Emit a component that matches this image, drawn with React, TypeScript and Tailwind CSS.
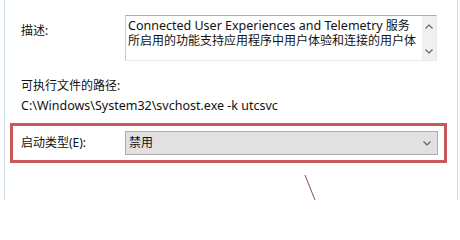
import React from "react";

const Chevron = ({ up = false }: { up?: boolean }) => (
  <svg width="8" height="5" viewBox="0 0 8 5" className="block">
    <path
      d={up ? "M0.5 4.5 L4 1 L7.5 4.5" : "M0.5 0.5 L4 4 L7.5 0.5"}
      fill="none"
      stroke="#606060"
      strokeWidth="1.1"
    />
  </svg>
);

export default function App() {
  return (
    <div
      className="relative w-[460px] h-[200px] bg-white overflow-hidden text-[12px] text-[#111111]"
      style={{ fontFamily: '"Noto Sans", "Noto Sans CJK SC", sans-serif' }}
    >
      <div className="ml-[4px] w-[454px] h-full border-l border-r border-l-[#c9d6e3] border-r-[#d6d6d6] pl-[16px] flex flex-col">
        {/* Description row */}
        <div className="flex mt-[15px]">
          <div className="w-[104px] mt-[8px] leading-[15px]">描述:</div>
          <div className="relative w-[312px] h-[46px] border border-t-[#abadb3] border-l-[#c8cbd2] border-r-[#e3e9ef] border-b-[#e3e9ef] flex">
            <div className="flex-1 min-w-0 pl-[2px] pt-[2px] leading-[15px] whitespace-nowrap overflow-hidden">
              <div className="h-[15px]">
                <span className="text-[12.5px]">Connected User Experiences and Telemetry</span> 服务
              </div>
              <div className="h-[15px]">所启用的功能支持应用程序中用户体验和连接的用户体</div>
            </div>
            <div className="w-[14px] h-full bg-[#f0f0f0] flex flex-col items-center justify-between pt-[8px] pb-[6px]">
              <Chevron up />
              <Chevron />
            </div>
          </div>
        </div>

        {/* Path */}
        <div className="mt-[15px] leading-[20px]">可执行文件的路径:</div>
        <div className="leading-[20px] text-[12.5px]">C:\Windows\System32\svchost.exe -k utcsvc</div>

        {/* Startup type (highlighted) */}
        <div className="mt-[7px] -ml-[11px] w-[437px] h-[40px] border-[3px] border-[#c8585a] flex items-center pl-[8px]">
          <div className="w-[104px]">启动类型(E):</div>
          <div className="w-[313px] h-[24px] border border-[#adadad] bg-[#e1e1e1] flex items-center justify-between pl-[3px] pr-[6px]">
            <span>禁用</span>
            <Chevron />
          </div>
        </div>
      </div>

      {/* Annotation arrow line */}
      <svg className="absolute left-[300px] top-[170px]" width="30" height="30" viewBox="0 0 30 30">
        <line x1="5" y1="5" x2="15" y2="30" stroke="#8a4a52" strokeWidth="1" />
      </svg>
    </div>
  );
}
